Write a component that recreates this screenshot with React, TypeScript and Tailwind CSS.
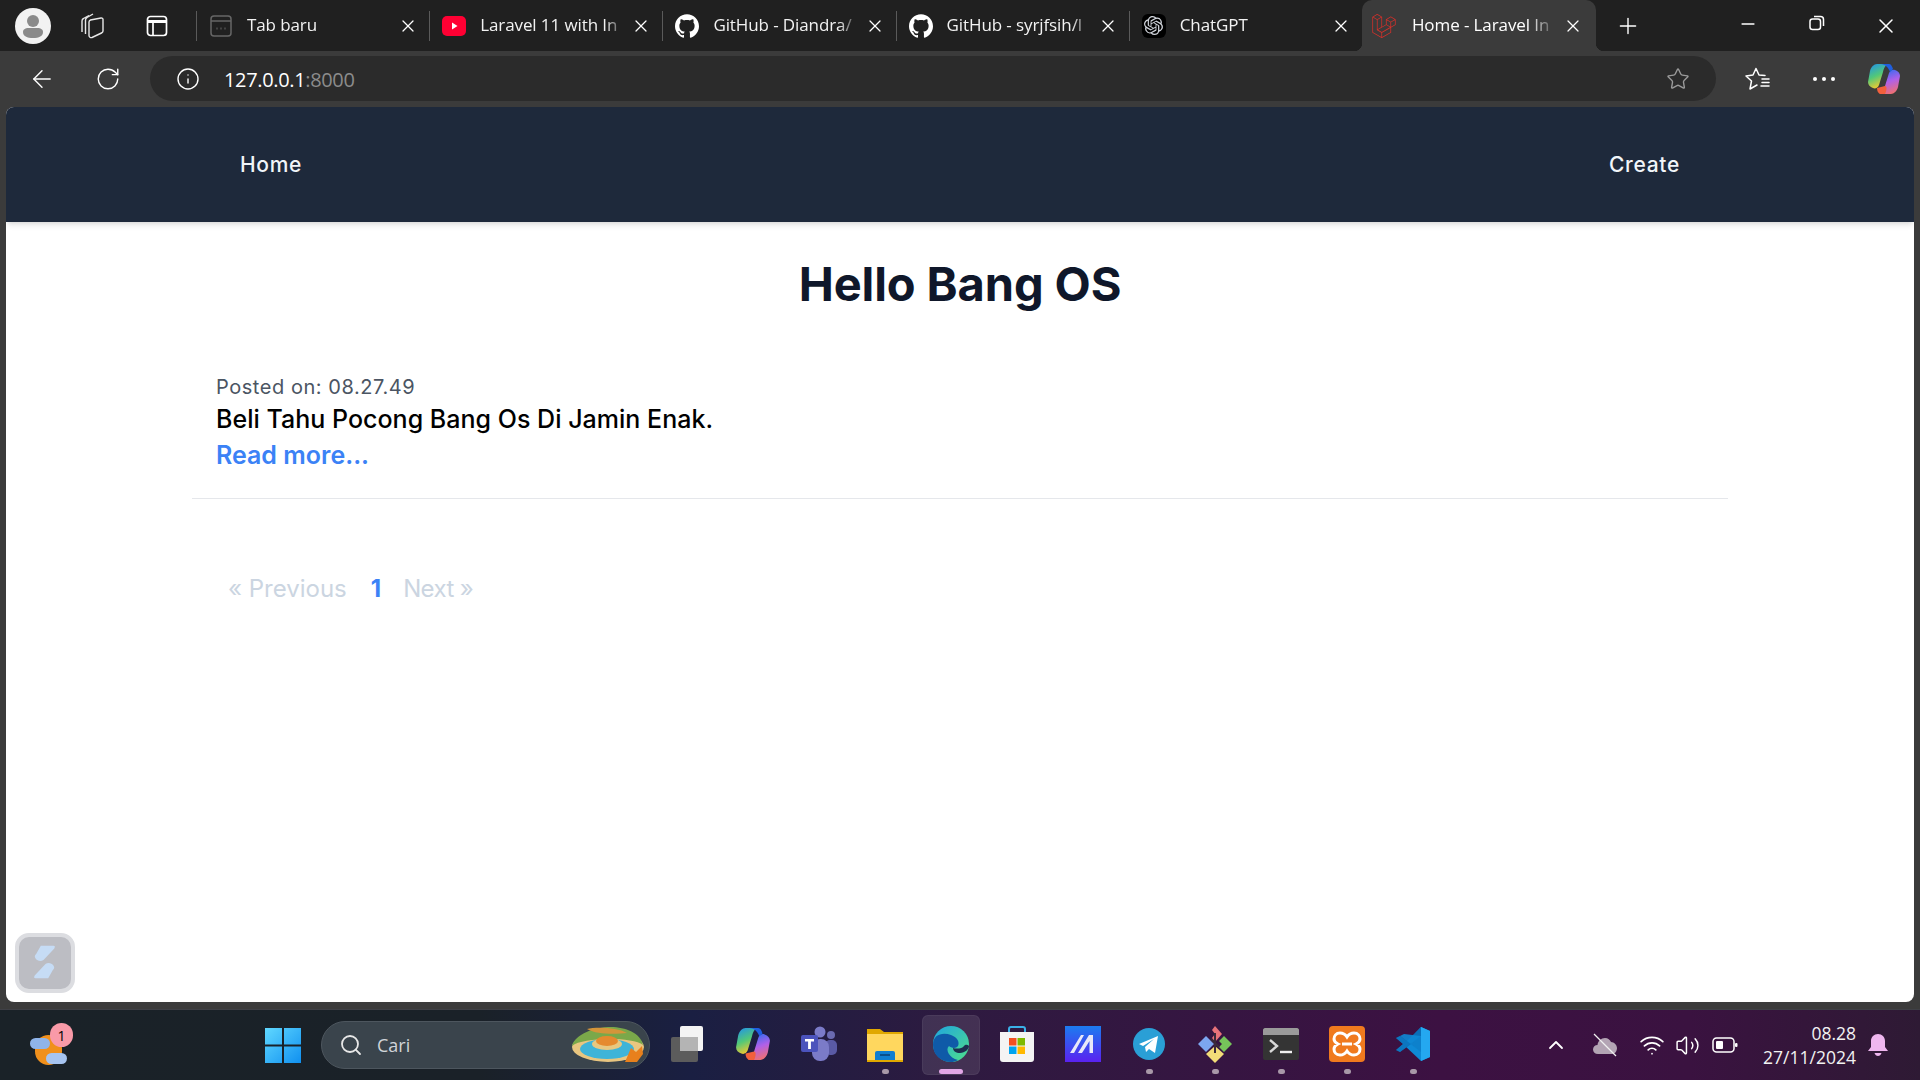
import { ArrowLeft, ChevronUp, Info, Minus, Plus, RotateCw, Search, Star, Volume2, Wifi, X } from "lucide-react";
import { SiGithub, SiLaravel, SiOpenai } from "react-icons/si";
import type { ReactNode } from "react";

const uiFont = "font-['Open_Sans','Noto_Sans',sans-serif]";
const pageFont = "font-['Inter','Liberation_Sans',sans-serif]";

function BlankTabIcon() {
  return (
    <svg width="22" height="24" viewBox="0 0 22 24" fill="none" stroke="#666" strokeWidth="1.5">
      <rect x="1" y="2" width="20" height="20" rx="3" />
      <path d="M1 7h20" />
      <path d="M6.5 14.5h1M10.5 14.5h1M14.5 14.5h1" strokeWidth="2" />
    </svg>
  );
}

function YoutubeIcon() {
  return (
    <svg width="24" height="24" viewBox="0 0 24 24">
      <rect x="0" y="2" width="24" height="20" rx="5" fill="#ff0033" />
      <path d="M10 8.5l5.5 3.5-5.5 3.5z" fill="#fff" />
    </svg>
  );
}

function ChatGptIcon() {
  return (
    <span className="flex h-[24px] w-[24px] items-center justify-center rounded-md bg-black">
      <SiOpenai className="h-[19px] w-[19px] text-gray-300" />
    </span>
  );
}

const tabs = [
  { title: "Tab baru", icon: <BlankTabIcon /> },
  { title: "Laravel 11 with In", icon: <YoutubeIcon /> },
  { title: "GitHub - Diandra/", icon: <SiGithub className="h-[24px] w-[24px] text-white" /> },
  { title: "GitHub - syrjfsih/l", icon: <SiGithub className="h-[24px] w-[24px] text-white" /> },
  { title: "ChatGPT", icon: <ChatGptIcon /> },
];

function Tab({ title, icon }: { title: string; icon: ReactNode }) {
  return (
    <div className="flex h-[51px] w-[232.2px] items-center pl-[12px] pr-[11px]">
      <span className="flex w-[24px] shrink-0 justify-center">{icon}</span>
      <span className="ml-[14px] flex-1 whitespace-nowrap pb-[2px] text-[17px] tracking-[-0.1px] text-[#f2f2f2] [mask-image:linear-gradient(to_right,black_86%,transparent)]">
        {title}
      </span>
      <X className="ml-[6px] h-[20px] w-[20px] shrink-0 text-white" strokeWidth={1.5} />
    </div>
  );
}

function TabStrip() {
  return (
    <div className="flex h-[51px] items-center bg-[#202020]">
      <div className="flex w-[66px] justify-center">
        <span className="relative flex h-[36px] w-[36px] items-center justify-center overflow-hidden rounded-full bg-[#f2f2f2]">
          <svg width="36" height="36" viewBox="0 0 36 36" fill="#8a8a8a">
            <circle cx="18" cy="13" r="6" />
            <path d="M8 24c0-3 3-4 5-4h10c2 0 5 1 5 4 0 4-4 6-10 6s-10-2-10-6z" />
          </svg>
        </span>
      </div>
      <div className="flex w-[52px] justify-center">
        <svg width="26" height="28" viewBox="0 0 26 28" fill="none" stroke="#e8e8e8" strokeWidth="1.4">
          <path d="M3 20V9c0-1 .5-2 1.500-2.500L10 3.500" />
          <path d="M6.500 22V8c0-1 .5-2 1.500-2.500L14 2" />
          <path d="M10 10c0-1 .5-1.500 1.500-2L22 6c1-.2 2 .5 2 1.500V19c0 1-.5 1.500-1.500 2L13 25.500c-1.500.5-3-.5-3-2z" />
        </svg>
      </div>
      <div className="flex w-[78px] justify-center">
        <svg width="24" height="24" viewBox="0 0 24 24" fill="none" stroke="#fff" strokeWidth="1.7">
          <rect x="2.5" y="2.5" width="19" height="19" rx="3" />
          <path d="M2.5 7.5h19" strokeWidth="3" />
          <path d="M8 7.5v14" />
        </svg>
      </div>
      <div className="flex items-center">
        {tabs.map((tab) => (
          <div key={tab.title} className="flex items-center">
            <span className="h-[30px] w-px bg-[#5a5a5a]" />
            <Tab title={tab.title} icon={tab.icon} />
          </div>
        ))}
      </div>
      <div className="relative flex h-[51px] w-[234px] items-center rounded-t-[10px] bg-[#3b3b3b] pl-[10px] pr-[13px]">
        <span className="absolute bottom-0 right-full h-[8px] w-[8px] bg-[radial-gradient(circle_at_0_0,#202020_8px,#3b3b3b_8.5px)]" />
        <span className="absolute bottom-0 left-full h-[8px] w-[8px] bg-[radial-gradient(circle_at_100%_0,#202020_8px,#3b3b3b_8.5px)]" />
        <span className="flex w-[24px] shrink-0 justify-center">
          <SiLaravel className="h-[24px] w-[24px] text-[#d6302a]" />
        </span>
        <span className="ml-[16px] flex-1 whitespace-nowrap pb-[2px] text-[17px] tracking-[-0.1px] text-white [mask-image:linear-gradient(to_right,black_80%,transparent)]">
          Home - Laravel In
        </span>
        <X className="ml-[6px] h-[20px] w-[20px] shrink-0 text-white" strokeWidth={1.5} />
      </div>
      <div className="flex w-[64px] justify-center">
        <Plus className="h-[26px] w-[26px] text-white" strokeWidth={1.3} />
      </div>
      <div className="ml-auto flex">
        <div className="flex w-[69px] justify-center">
          <Minus className="h-[20px] w-[20px] text-white" strokeWidth={2} />
        </div>
        <div className="flex w-[69px] justify-center">
          <svg width="18" height="18" viewBox="0 0 18 18" fill="none" stroke="#fff" strokeWidth="1.5">
            <rect x="2" y="5" width="10.5" height="10.5" rx="2.5" />
            <path d="M6 2.5h6.5c1.7 0 3 1.3 3 3V12" />
          </svg>
        </div>
        <div className="flex w-[69px] justify-center">
          <X className="h-[24px] w-[24px] text-white" strokeWidth={1.5} />
        </div>
      </div>
    </div>
  );
}

function CopilotIcon({ size, id }: { size: number; id: string }) {
  return (
    <svg width={size} height={size} viewBox="0 0 34 34">
      <defs>
        <linearGradient id={`${id}A`} x1="0" y1="0" x2="0.4" y2="1">
          <stop offset="0" stopColor="#1e90f0" />
          <stop offset="0.55" stopColor="#52c878" />
          <stop offset="1" stopColor="#f0c830" />
        </linearGradient>
        <linearGradient id={`${id}B`} x1="0.3" y1="0" x2="0.6" y2="1">
          <stop offset="0" stopColor="#2f6cf0" />
          <stop offset="0.5" stopColor="#b060e8" />
          <stop offset="1" stopColor="#f07070" />
        </linearGradient>
      </defs>
      <path d="M10 2h12c-4 1-5 4-6 8l-4 13c-1 3-4 4-6 3-3-1-5-3-5-6l2-11c1-4 4-7 7-7z" fill={`url(#${id}A)`} />
      <path d="M24 32H12c4-1 5-4 6-8l4-13c1-3 4-4 6-3 3 1 5 3 5 6l-2 11c-1 4-4 7-7 7z" fill={`url(#${id}B)`} />
      <path d="M14 2h8c2 0 3 2 4 5l-3 3c-1-3-3-7-9-8z" fill="#1f5fe0" />
      <path d="M10 26l8-2c2 0 2 4 0 8h-5c-2-1-3-3-3-6z" fill="#f2603c" />
    </svg>
  );
}

function Toolbar() {
  return (
    <div className="flex h-[56px] items-center bg-[#3b3b3b] pb-[1px] text-white">
      <div className="flex w-[84px] justify-center">
        <ArrowLeft className="h-[28px] w-[28px]" strokeWidth={1.2} />
      </div>
      <div className="flex w-[48px] justify-center">
        <RotateCw className="h-[26px] w-[26px]" strokeWidth={1.3} />
      </div>
      <div className="ml-[18px] flex h-[45px] flex-1 items-center rounded-full bg-[#2b2b2b] px-[26px]">
        <Info className="h-[24px] w-[24px]" strokeWidth={1.4} />
        <span className="ml-[24px] pt-[2px] text-[20px] tracking-[-0.35px]">
          127.0.0.1<span className="text-[#8c8c8c]">:8000</span>
        </span>
        <Star className="ml-auto h-[24px] w-[24px] text-[#9a9a9a]" strokeWidth={1.4} />
      </div>
      <div className="flex w-[84px] justify-center">
        <svg width="26" height="24" viewBox="0 0 26 24" fill="none" stroke="#fff" strokeWidth="1.5" strokeLinejoin="round" strokeLinecap="round">
          <path d="M20 8.500L14 8l-3-6.500L8 8l-7 1 5.500 5L5 22l7-4" />
          <path d="M17 12h7M17 15.500h7M16 19h8" />
        </svg>
      </div>
      <div className="flex w-[48px] justify-center gap-[5px]">
        <span className="h-[4px] w-[4px] rounded-full bg-white" />
        <span className="h-[4px] w-[4px] rounded-full bg-white" />
        <span className="h-[4px] w-[4px] rounded-full bg-white" />
      </div>
      <div className="flex w-[72px] justify-center">
        <CopilotIcon size={34} id="copTop" />
      </div>
    </div>
  );
}

function WidgetButton() {
  return (
    <div className="absolute bottom-[9px] left-[9px] flex h-[60px] w-[60px] items-center justify-center rounded-[14px] border-[4px] border-[#dcdde1] bg-[#bcbdc3]">
      <svg width="30" height="38" viewBox="0 0 30 38" fill="#c6dcf5">
        <path d="M12 3l14 0c2 0 2 1 1 3L15 19c-3 2-7 1-9-2-1-2-1-3 1-5z" transform="translate(0 -1) scale(0.9)" />
        <path d="M18 37L4 37c-2 0-2-1-1-3l12-13c3-2 7-1 9 2 1 2 1 3-1 5z" transform="translate(2 1) scale(0.9)" />
      </svg>
    </div>
  );
}

function Page() {
  return (
    <div className="flex-1 bg-[#3b3b3b] px-[6px] pb-[7px]">
      <div className={`relative h-full overflow-hidden rounded-[8px] bg-white ${pageFont}`}>
        <nav className="h-[115px] bg-[#1e293b] shadow-md">
          <div className="mx-auto flex h-full w-[1536px] items-center justify-between px-[48px] text-[21px] font-medium tracking-[0.7px] text-[#f1f5f9]">
            <span>Home</span>
            <span>Create</span>
          </div>
        </nav>
        <main className="mx-auto w-[1536px] pt-[36px]">
          <h1 className="text-center text-[47px] font-bold leading-[52px] tracking-[-0.1px] text-[#0f172a]">Hello Bang OS</h1>
          <div className="mt-[62px] border-b border-[#e5e7eb] px-[24px] pb-[25px]">
            <p className="text-[20px] leading-[30px] tracking-[0.55px] text-[#4b5563]">Posted on: 08.27.49</p>
            <p className="text-[25px] font-medium leading-[35px] tracking-[0.02px] text-black">Beli Tahu Pocong Bang Os Di Jamin Enak.</p>
            <a className="block text-[25px] font-semibold leading-[36px] text-[#3b82f6]">Read more...</a>
          </div>
          <div className="mt-[74px] flex items-center pl-[36px] text-[24px] leading-[32px] text-[#cbd5e1]">
            <span>« Previous</span>
            <span className="ml-[24px] font-bold text-[#3b82f6]">1</span>
            <span className="ml-[22px] tracking-[-0.6px]">Next »</span>
          </div>
        </main>
        <WidgetButton />
      </div>
    </div>
  );
}

function Landscape() {
  return (
    <svg width="74" height="38" viewBox="0 0 74 38">
      <ellipse cx="37" cy="21" rx="36" ry="15" fill="#e9c680" />
      <path d="M1 20C4 8 24 1 40 1c14 0 30 6 32 18-10-8-60-8-71 1z" fill="#7aa84a" />
      <path d="M16 3c8-2 30-2 40 4-10 1-30 2-40-4z" fill="#d4953a" />
      <ellipse cx="36" cy="23" rx="27" ry="10" fill="#3fb4d8" />
      <ellipse cx="36" cy="18" rx="15" ry="6" fill="#e8c880" />
      <ellipse cx="36" cy="15" rx="11" ry="5" fill="#e58a2e" />
      <path d="M54 36l6-14 5 4 6-6 1 8-6 8z" fill="#e8801c" />
    </svg>
  );
}

function EdgeIcon() {
  return (
    <svg width="38" height="38" viewBox="0 0 38 38">
      <defs>
        <linearGradient id="edgeA" x1="0" y1="0" x2="1" y2="1">
          <stop offset="0" stopColor="#1fa5e0" />
          <stop offset="1" stopColor="#4fe08a" />
        </linearGradient>
      </defs>
      <circle cx="19" cy="19" r="18" fill="url(#edgeA)" />
      <path d="M1 20C1 9 11 7 19 10c6 2 9 7 7 11-2 3-7 2-9 0-4 3 0 12 9 14-3 1.500-5 2-7 2C9 37 1 30 1 20z" fill="#0f5aa8" />
      <path d="M37 21c0 3-4 7-9 7-4 0-7-2-7-5 3 1 9 1 11-2 1-1 3-2 5 0z" fill="#1e2f50" />
    </svg>
  );
}

function TeamsIcon() {
  return (
    <svg width="36" height="36" viewBox="0 0 36 36">
      <circle cx="30" cy="9" r="4" fill="#6a6ab0" />
      <rect x="24" y="14" width="12" height="15" rx="5" fill="#5a5aa5" />
      <circle cx="19" cy="6" r="5.500" fill="#7b7bc8" />
      <rect x="11" y="13" width="17" height="22" rx="8" fill="#7b7bc8" />
      <rect x="0" y="9" width="17" height="17" rx="2" fill="#4b53bc" />
      <path d="M4 13h9v2.500H9.900V23H7.100v-7.500H4z" fill="#fff" />
    </svg>
  );
}

function FolderIcon() {
  return (
    <svg width="36" height="36" viewBox="0 0 36 36">
      <path d="M0 3h13l4 3h19v30H0z" fill="#e0a800" />
      <rect x="0" y="8" width="36" height="27" fill="#ffd75e" />
      <rect x="8" y="25" width="20" height="12" rx="2" fill="#0f7ed0" />
      <rect x="13" y="28" width="10" height="2" fill="#0a4f8a" />
      <rect x="0" y="34" width="36" height="2" fill="#e0a800" />
    </svg>
  );
}

function StoreIcon() {
  return (
    <svg width="36" height="38" viewBox="0 0 36 38">
      <path d="M10 8V4c0-1.500 1-2 2-2h12c1 0 2 .5 2 2v4" fill="none" stroke="#3ab0e8" strokeWidth="2" />
      <path d="M1 7h34v27c0 2-1 3-3 3H4c-2 0-3-1-3-3z" fill="#f4f4f4" />
      <rect x="10" y="13" width="7.500" height="7.500" fill="#f25022" />
      <rect x="18.500" y="13" width="7.500" height="7.500" fill="#7fba00" />
      <rect x="10" y="21.500" width="7.500" height="7.500" fill="#00a4ef" />
      <rect x="18.500" y="21.500" width="7.500" height="7.500" fill="#ffb900" />
    </svg>
  );
}

function MaIcon() {
  return (
    <svg width="36" height="36" viewBox="0 0 36 36">
      <defs>
        <linearGradient id="maA" x1="0" y1="0" x2="0" y2="1">
          <stop offset="0" stopColor="#1c7cf0" />
          <stop offset="1" stopColor="#5a22f0" />
        </linearGradient>
      </defs>
      <rect width="36" height="36" fill="url(#maA)" />
      <path d="M5 27L16 9h3L9 27zM13 27L24 9h4v18h-3.500V15L17 27z" fill="#e8e8f8" />
    </svg>
  );
}

function TelegramIcon() {
  return (
    <svg width="34" height="34" viewBox="0 0 34 34">
      <circle cx="17" cy="17" r="16" fill="#2a9fd6" />
      <path d="M7 17l19-8-3 17-6-4-3 3-1-5 9-8-11 7z" fill="#fff" />
    </svg>
  );
}

function GitGuiIcon() {
  return (
    <svg width="36" height="38" viewBox="0 0 36 38">
      <path d="M18 1l7 8-7 8-3-4 3-4-3-4z" fill="#e8727a" />
      <path d="M9 11l8 8-8 8-8-8z" fill="#7ca6f0" />
      <path d="M27 11l8 8-8 8-5-5 3-3-3-3z" fill="#76c45a" />
      <path d="M18 21l9 8-9 9-9-9z" fill="#f2dc78" />
      <path d="M18 8v20M14 14l8 8" stroke="#3a2a3a" strokeWidth="2" />
    </svg>
  );
}

function TerminalIcon() {
  return (
    <svg width="36" height="32" viewBox="0 0 36 32">
      <rect width="36" height="32" rx="2" fill="#343434" />
      <path d="M0 2c0-1 1-2 2-2h32c1 0 2 1 2 2v5H0z" fill="#9a9a9a" />
      <path d="M7 12l7 6-7 6" fill="none" stroke="#d8d8d8" strokeWidth="2.400" />
      <path d="M17 24h12" stroke="#f0f0f0" strokeWidth="2.400" />
    </svg>
  );
}

function XamppIcon() {
  return (
    <svg width="36" height="36" viewBox="0 0 36 36">
      <rect width="36" height="36" rx="4" fill="#f07a1e" />
      <path d="M11 7c-4 0-6 3-6 6s2 4 4 5c-2 1-4 2-4 5s2 6 6 6c3 0 5-1 7-4 2 3 4 4 7 4 4 0 6-3 6-6s-2-4-4-5c2-1 4-2 4-5s-2-6-6-6c-3 0-5 1-7 4-2-3-4-4-7-4z" fill="none" stroke="#fff" strokeWidth="3" />
      <path d="M13 18h10" stroke="#fff" strokeWidth="3" />
    </svg>
  );
}

function VsCodeIcon() {
  return (
    <svg width="36" height="36" viewBox="0 0 36 36">
      <path d="M26 1l9 4v26l-9 4L9 19z" fill="#0e8ad6" />
      <path d="M26 1l9 4v26l-9 4z" fill="#24a8f0" />
      <path d="M26 10L12 21l-7 5-4-2 7-6-7-6 4-2 7 5L26 1z" fill="#0a6fb8" />
      <path d="M26 10v16L5 10l4-2z" fill="#0e8ad6" opacity="0.9" />
      <path d="M26 26L12 15 5 10l-4 2 7 6-7 6 4 2 21-16z" fill="#0e7cc4" opacity="0.6" />
    </svg>
  );
}

const apps: { key: string; icon: ReactNode; dot?: boolean; active?: boolean }[] = [
  {
    key: "taskview",
    icon: (
      <svg width="32" height="36" viewBox="0 0 32 36">
        <rect x="0" y="11" width="27" height="25" rx="2" fill="#5c5c5c" />
        <rect x="9" y="0" width="23" height="25" rx="2" fill="#f4f4f4" />
        <rect x="9" y="11" width="18" height="14" fill="#b4b4b4" />
      </svg>
    ),
  },
  { key: "copilot", icon: <CopilotIcon size={36} id="copBar" /> },
  { key: "teams", icon: <TeamsIcon /> },
  { key: "folder", icon: <FolderIcon />, dot: true },
  { key: "edge", icon: <EdgeIcon />, active: true },
  { key: "store", icon: <StoreIcon /> },
  { key: "ma", icon: <MaIcon /> },
  { key: "telegram", icon: <TelegramIcon />, dot: true },
  { key: "git", icon: <GitGuiIcon />, dot: true },
  { key: "terminal", icon: <TerminalIcon />, dot: true },
  { key: "xampp", icon: <XamppIcon />, dot: true },
  { key: "vscode", icon: <VsCodeIcon />, dot: true },
];

function Taskbar() {
  return (
    <div className={`flex h-[71px] items-center border-t border-[#3f4046] bg-[linear-gradient(90deg,#1a2228_0%,#1a2128_25%,#1a1f42_36%,#2e1a40_50%,#3c1142_75%,#3a1240_88%,#2e1a34_100%)] text-white ${uiFont}`}>
      <div className="flex w-[96px] justify-center">
        <div className="relative h-[44px] w-[44px]">
          <span className="absolute left-[9px] top-[12px] h-[30px] w-[27px] rounded-full bg-[#f0901c]" />
          <span className="absolute left-[4px] top-[15px] h-[11px] w-[20px] rounded-full bg-[#8fb4ea]" />
          <span className="absolute left-[20px] top-[30px] h-[11px] w-[21px] rounded-full bg-[#a6c4f0]" />
          <span className="absolute left-[24px] top-[0px] flex h-[24px] w-[23px] items-center justify-center rounded-full bg-[#f99aa8] text-[14px] text-black">1</span>
        </div>
      </div>
      <div className="ml-[154px] flex w-[66px] justify-center">
        <svg width="36" height="36" viewBox="0 0 36 36">
          <defs>
            <linearGradient id="winA" x1="0" y1="0" x2="1" y2="1">
              <stop offset="0" stopColor="#60d8ff" />
              <stop offset="1" stopColor="#1090f0" />
            </linearGradient>
          </defs>
          <path d="M0 1h17v16.500H0zM19 1h17v16.500H19zM0 19.500h17V36H0zM19 19.500h17V36H19z" fill="url(#winA)" />
        </svg>
      </div>
      <div className="ml-[5px] flex h-[48px] w-[329px] items-center rounded-full border border-[#4d565e] bg-[#3a444c] pl-[17px] pr-[4px]">
        <Search className="h-[24px] w-[24px] text-[#e8e8e8]" strokeWidth={1.8} />
        <span className="ml-[14px] text-[18px] text-[#d0d4d8]">Cari</span>
        <span className="ml-auto">
          <Landscape />
        </span>
      </div>
      <div className="ml-[4px] flex">
        {apps.map((app) => (
          <div key={app.key} className="relative flex h-[60px] w-[66px] items-center justify-center">
            {app.active && <span className="absolute left-[4px] top-0 h-[60px] w-[58px] rounded-[6px] border border-white/5 bg-white/10" />}
            <span className="relative flex -translate-y-[1px] items-center justify-center">{app.icon}</span>
            {app.dot && <span className="absolute bottom-[1px] left-[30px] h-[5px] w-[7px] rounded-full bg-[#a898a8]" />}
            {app.active && <span className="absolute bottom-[1px] left-[21px] h-[5px] w-[24px] rounded-full bg-[#e2a6e6]" />}
          </div>
        ))}
      </div>
      <div className="ml-auto flex items-center pr-[20px]">
        <div className="flex w-[40px] justify-center">
          <ChevronUp className="h-[24px] w-[24px]" strokeWidth={1.8} />
        </div>
        <div className="flex w-[58px] justify-center">
          <svg width="26" height="24" viewBox="0 0 26 24">
            <path d="M6 21c-3 0-5-2-5-4.500S3 12 5.500 12C6 8 9 5 13 5c3 0 5 2 6 4 3 0 6 3 6 6s-2 6-5 6z" fill="#b3a4b4" />
            <path d="M2 1l22 22" stroke="#f0f0f0" strokeWidth="1.300" />
          </svg>
        </div>
        <div className="flex w-[36px] justify-center">
          <Wifi className="h-[26px] w-[26px]" strokeWidth={1.6} />
        </div>
        <div className="flex w-[34px] justify-center">
          <Volume2 className="h-[25px] w-[25px]" strokeWidth={1.4} />
        </div>
        <div className="flex w-[42px] justify-center">
          <svg width="26" height="18" viewBox="0 0 26 18" fill="none">
            <rect x="1" y="2" width="21" height="14" rx="3.500" stroke="#fff" strokeWidth="1.500" />
            <rect x="4" y="5" width="7" height="8" rx="1" fill="#fff" />
            <rect x="23" y="7" width="2.500" height="4" rx="1" fill="#fff" />
          </svg>
        </div>
        <div className="w-[110px] text-right text-[17.5px] leading-[24px] text-[#f2f2f2]">
          <div>08.28</div>
          <div>27/11/2024</div>
        </div>
        <div className="flex w-[44px] justify-center">
          <svg width="22" height="24" viewBox="0 0 22 24" fill="#efb6ef">
            <path d="M11 1c-4 0-7 3-7 7v6l-3 4h20l-3-4V8c0-4-3-7-7-7z" />
            <path d="M7.500 20h7c-.5 2-2 3-3.500 3s-3-1-3.500-3z" />
          </svg>
        </div>
      </div>
    </div>
  );
}

export default function App() {
  return (
    <div className={`flex h-[1080px] w-[1920px] flex-col overflow-hidden ${uiFont}`}>
      <TabStrip />
      <Toolbar />
      <Page />
      <Taskbar />
    </div>
  );
}
